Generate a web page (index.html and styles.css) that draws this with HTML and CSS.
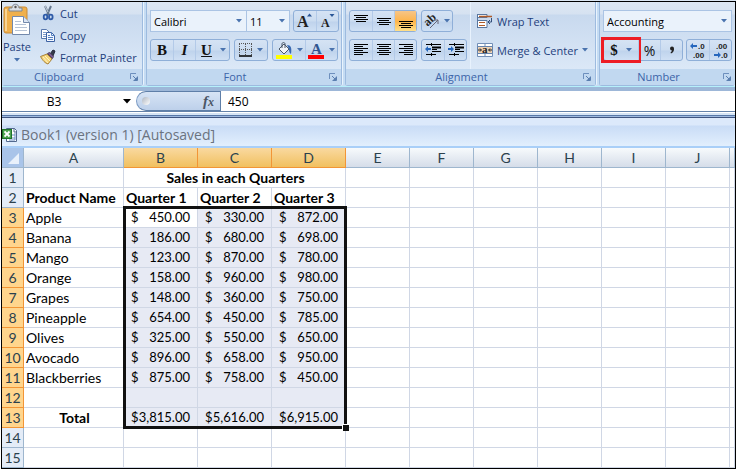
FILE: index.html
```html
<!DOCTYPE html>
<html lang="en">
<head>
<meta charset="utf-8">
<title>Book1 (version 1) [Autosaved]</title>
<link rel="stylesheet" href="styles.css">
</head>
<body>
<svg class="defs" aria-hidden="true">
  <symbol id="caret" viewBox="0 0 6 4"><path d="M0 0h6L3 3.5z" fill="currentColor"/></symbol>
  <symbol id="launch" viewBox="0 0 8 8"><path d="M0.5 6V0.500H6" fill="none" stroke="#6d8fbd"/><path d="M3 3l3 3M7.500 3.500v4h-4" fill="none" stroke="#5a7fb0"/><path d="M7 4v3H4z" fill="#5a7fb0"/></symbol>
</svg>
<div class="app">
  <header class="ribbon">
    <section class="group clipboard">
      <div class="body">
        <button class="paste">
          <svg width="28" height="34" viewBox="0 0 28 34">
            <rect x="1" y="3" width="23" height="26" rx="2" fill="#f0b04c" stroke="#c98a35"/>
            <path d="M3 5v22" stroke="#f9d493" stroke-width="2"/>
            <path d="M6 7V4h3c0-5 7-5 7 0h3v3z" fill="#d9dde3" stroke="#7d8590"/><circle cx="12.500" cy="3" r="1.200" fill="#555"/>
            <path d="M9.500 12.500h11l6 6v12h-17z" fill="#fff" stroke="#7389ac"/>
            <path d="M20.500 12.500v6h6" fill="#dbe5f3" stroke="#7389ac"/>
            <path d="M12 17.500h6M12 20.500h11M12 23.500h12M12 26.500h12" stroke="#b6c3d6"/>
          </svg>
          <span>Paste</span>
          <svg class="caret"><use href="#caret"/></svg>
        </button>
        <div class="stack">
          <button class="cmd"><svg width="16" height="16" viewBox="0 0 16 16"><path d="M5 1l4 9M11 1L7 10" stroke="#66788f" stroke-width="2"/><path d="M5 1l3 6" stroke="#c7d0db"/><ellipse cx="5.500" cy="12" rx="1.800" ry="2.300" fill="none" stroke="#2f5ba8" stroke-width="1.800"/><ellipse cx="10.800" cy="12" rx="1.800" ry="2.300" fill="none" stroke="#2f5ba8" stroke-width="1.800"/></svg><span>Cut</span></button>
          <button class="cmd"><svg width="16" height="16" viewBox="0 0 16 16"><path d="M1.500 2.500h5l3 3v6h-8z" fill="#fff" stroke="#5777ad"/><path d="M3 5.500h3M3 7.500h4M3 9.500h4" stroke="#7c9bcb"/><path d="M6.500 5.500h5l3 3v6h-8z" fill="#f4f8ff" stroke="#3d62a3"/><path d="M11.500 5.500v3h3M8 8.500h2M8 10.500h5M8 12.500h5" fill="none" stroke="#5480c0"/></svg><span>Copy</span></button>
          <button class="cmd"><svg width="16" height="16" viewBox="0 0 16 16"><path d="M10 5l3-4 2 1-2 5z" fill="#343a4a" stroke="#23283a"/><path d="M0.500 7.500L7 5l5 5-4 5c-3-1-5-3-7.500-7.500z" fill="#f5d478" stroke="#a88139"/><path d="M3 8l5 6M5 7l5 5" stroke="#fff3c4"/><path d="M7.500 4.500l5 5 1-2-4-4z" fill="#7b5b91" stroke="#50405f"/></svg><span>Format Painter</span></button>
        </div>
      </div>
      <footer><span>Clipboard</span><button class="launch" aria-label="Clipboard options"><svg width="8" height="8"><use href="#launch"/></svg></button></footer>
    </section>

    <section class="group font">
      <div class="body rows">
        <div class="row">
          <div class="combos">
            <label class="combo name"><select aria-label="Font"><option>Calibri</option></select><svg class="caret"><use href="#caret"/></svg></label>
            <label class="combo size"><select aria-label="Font size"><option>11</option></select><svg class="caret"><use href="#caret"/></svg></label>
          </div>
          <div class="set">
            <button class="tool w22" aria-label="Grow font"><svg width="18" height="18" viewBox="0 0 18 18"><text x="1" y="15" class="serif" font-size="16">A</text><path d="M11 4.500h5L13.500 1.500z" fill="#2b5797"/></svg></button>
            <button class="tool w22" aria-label="Shrink font"><svg width="18" height="18" viewBox="0 0 18 18"><text x="2" y="15" class="serif" font-size="12">A</text><path d="M10.500 2h5L13 5z" fill="#2b5797"/></svg></button>
          </div>
        </div>
        <div class="row spread">
          <div class="set">
            <button class="tool letter w22">B</button>
            <button class="tool letter w22 italic">I</button>
            <button class="tool letter w22 under">U</button>
            <button class="tool w12" aria-label="Underline styles"><svg class="caret"><use href="#caret"/></svg></button>
          </div>
          <div class="set">
            <button class="tool w32" aria-label="Borders"><svg width="14" height="14" viewBox="0 0 14 14"><path d="M.5 1v11M6.500 1v11M12.500 1v11M0 .5h13M0 6.500h13" stroke="#555" stroke-dasharray="1 1"/><path d="M0 13h13" stroke="#000" stroke-width="1.500"/></svg><svg class="caret"><use href="#caret"/></svg></button>
          </div>
          <div class="set">
            <button class="tool w32" aria-label="Fill color"><svg width="17" height="17" viewBox="0 0 17 17"><path d="M3 7l5-5 5 5-5 5z" fill="#f1f4f8" stroke="#4c5968"/><path d="M6 6V2c0-2 3-2 3 0v4" fill="none" stroke="#4c5968"/><path d="M11 3c4 0 5 3 4 9-2-1-2-4-2-5z" fill="#3869b1"/><path d="M0 13h16v4H0z" fill="#ff0"/></svg><svg class="caret"><use href="#caret"/></svg></button>
            <button class="tool w32" aria-label="Font color"><svg width="17" height="17" viewBox="0 0 17 17"><text x="3" y="12" class="serif blue" font-size="15">A</text><path d="M0 13h16v4H0z" fill="red"/></svg><svg class="caret"><use href="#caret"/></svg></button>
          </div>
        </div>
      </div>
      <footer><span>Font</span><button class="launch" aria-label="Font options"><svg width="8" height="8"><use href="#launch"/></svg></button></footer>
    </section>

    <section class="group align">
      <div class="body">
        <div class="rows">
          <div class="row">
            <div class="set">
              <button class="tool w22" aria-label="Top align"><svg width="14" height="16" viewBox="0 0 14 16"><path d="M0 2.500h14M2 4.500h10M0 6.500h14M2 8.500h10" stroke="#000"/></svg></button>
              <button class="tool w22" aria-label="Middle align"><svg width="14" height="16" viewBox="0 0 14 16"><path d="M0 5.500h14M2 7.500h10M0 9.500h14M2 11.500h10" stroke="#000"/></svg></button>
              <button class="tool w22 on" aria-label="Bottom align"><svg width="14" height="16" viewBox="0 0 14 16"><path d="M0 8.500h14M2 10.500h10M0 12.500h14M2 14.500h10" stroke="#000"/></svg></button>
            </div>
            <div class="set">
              <button class="tool w30" aria-label="Orientation"><svg width="16" height="16" viewBox="0 0 16 16"><text x="1" y="11" class="serif" font-size="12" transform="rotate(-42 6 9)">ab</text><path d="M6 15l8-8M14 7h-4M14 7v4" fill="none" stroke="#667"/></svg><svg class="caret"><use href="#caret"/></svg></button>
            </div>
          </div>
          <div class="row">
            <div class="set">
              <button class="tool w22" aria-label="Align left"><svg width="14" height="12" viewBox="0 0 14 12"><path d="M0 .5h14M0 2.500h9M0 4.500h14M0 6.500h9M0 8.500h14M0 10.500h9" stroke="#000"/></svg></button>
              <button class="tool w22" aria-label="Center"><svg width="14" height="12" viewBox="0 0 14 12"><path d="M0 .5h14M2 2.500h10M0 4.500h14M2 6.500h10M0 8.500h14M2 10.500h10" stroke="#000"/></svg></button>
              <button class="tool w22" aria-label="Align right"><svg width="14" height="12" viewBox="0 0 14 12"><path d="M0 .5h14M5 2.500h9M0 4.500h14M5 6.500h9M0 8.500h14M5 10.500h9" stroke="#000"/></svg></button>
            </div>
            <div class="set">
              <button class="tool w22" aria-label="Decrease indent"><svg width="16" height="14" viewBox="0 0 16 14"><path d="M1 1.500h15M7 6.500h5M7 8.500h9M1 11.500h10" stroke="#000"/><path d="M7 4.500h9" stroke="#000" stroke-width="2"/><path d="M6.500 0v3M6.500 10v4" stroke="#000" stroke-dasharray="1 1"/><path d="M0 6l3-3v2h3v2H3v2z" fill="#2667bd"/></svg></button>
              <button class="tool w22" aria-label="Increase indent"><svg width="16" height="14" viewBox="0 0 16 14"><path d="M1 1.500h15M7 6.500h5M7 8.500h9M1 11.500h10" stroke="#000"/><path d="M7 4.500h9" stroke="#000" stroke-width="2"/><path d="M6.500 0v3M6.500 10v4" stroke="#000" stroke-dasharray="1 1"/><path d="M6 6L3 3v2H0v2h3v2z" fill="#2667bd"/></svg></button>
            </div>
          </div>
        </div>
        <div class="rows cell-tools">
          <button class="cmd"><svg width="16" height="16" viewBox="0 0 16 16"><path d="M.5 1v14" stroke="#59779f"/><path d="M1 1.500h9v3H1M1 7.500h9v7H1" fill="#fff" stroke="#59779f"/><path d="M2 3.500h13" stroke="#b05c2a" stroke-width="1.500"/><path d="M2 9.500h6M2 12.500h6" stroke="#b05c2a"/><path d="M14.500 5v4h-3M13 7l-2 2 2 2" fill="none" stroke="#334e78"/></svg><span>Wrap Text</span></button>
          <button class="cmd"><svg width="16" height="16" viewBox="0 0 16 16"><path d="M.5 1.500h15v13H.5zM8 2v3M8 11v3" fill="#fff" stroke="#7390b8"/><path d="M.5 4.500h15v7H.5z" fill="#eed2b4" stroke="#6483ad"/><text x="5" y="11" class="serif" font-size="11">a</text><path d="M1 8h3M12 8h3M3 6.500L4.500 8 3 9.500M13 6.500L11.500 8 13 9.500" fill="none" stroke="#222"/></svg><span>Merge &amp; Center</span><svg class="caret"><use href="#caret"/></svg></button>
        </div>
      </div>
      <footer><span>Alignment</span><button class="launch" aria-label="Alignment options"><svg width="8" height="8"><use href="#launch"/></svg></button></footer>
    </section>

    <section class="group number">
      <div class="body rows">
        <label class="combo"><select aria-label="Number format"><option>Accounting</option></select><svg class="caret"><use href="#caret"/></svg></label>
        <div class="row">
          <div class="set">
            <button class="tool letter w34 marked">$<svg class="caret"><use href="#caret"/></svg></button>
            <button class="tool w22 percent">%</button>
            <button class="tool w22" aria-label="Comma style"><svg width="6" height="8" viewBox="0 0 6 8"><circle cx="3" cy="2.500" r="2" fill="#222"/><path d="M5 2.500c0 3-1 4-3 5l-.5-1c1-.8 1.500-1.500 1.500-3z" fill="#222"/></svg></button>
          </div>
          <div class="set">
            <button class="tool w22" aria-label="Increase decimal"><svg width="16" height="18" viewBox="0 0 16 18"><path d="M0 5l3-3v2h4v2H3v2z" fill="#2667bd"/><text x="8" y="8" class="dec">.0</text><text x="3" y="17" class="dec">.00</text></svg></button>
            <button class="tool w22" aria-label="Decrease decimal"><svg width="16" height="18" viewBox="0 0 16 18"><path d="M8 14l-3-3v2H1v2h4v2z" fill="#2667bd"/><text x="3" y="8" class="dec">.00</text><text x="8" y="17" class="dec">.0</text></svg></button>
          </div>
        </div>
      </div>
      <footer><span>Number</span><button class="launch" aria-label="Number options"><svg width="8" height="8"><use href="#launch"/></svg></button></footer>
    </section>
  </header>

  <div class="formula">
    <input class="namebox" aria-label="Name box" value="B3">
    <button class="drop" aria-label="Names"><svg width="8" height="5" viewBox="0 0 8 5"><path d="M0 0h8L4 4.500z"/></svg></button>
    <div class="pill"><i></i><button class="fx">f<small>x</small></button></div>
    <input class="content" aria-label="Formula" value="450">
  </div>

  <div class="title">
    <svg width="16" height="16" viewBox="0 0 16 16"><path d="M4.500 1.500h8l2 2v11h-10z" fill="#fff" stroke="#52698f"/><path d="M12 1v4h3" fill="none" stroke="#52698f"/><path d="M7 13h6V6M9 11h4M10 8h3" fill="none" stroke="#6d8fc4"/><rect x=".5" y="2.500" width="9" height="9" fill="#4ca350" stroke="#1f7429"/><path d="M2.500 4.500l5 5M7.500 4.500l-5 5" stroke="#fff" stroke-width="1.800"/></svg>
    <h1>Book1 (version 1) [Autosaved]</h1>
  </div>

  <table class="sheet">
    <colgroup><col class="c-head"><col class="c-a"><col class="c-q"><col class="c-q"><col class="c-q"><col class="c-e"><col class="c-e"><col class="c-e"><col class="c-e"><col class="c-e"><col class="c-e"><col></colgroup>
    <thead>
      <tr><th class="corner"><svg width="11" height="11" viewBox="0 0 11 11"><path d="M11 0v11H0z" fill="#e9f1fb"/></svg></th><th>A</th><th class="sel">B</th><th class="sel">C</th><th class="sel">D</th><th>E</th><th>F</th><th>G</th><th>H</th><th>I</th><th>J</th><th></th></tr>
    </thead>
    <tbody>
      <tr><th>1</th><td></td><td colspan="3" class="heading">Sales in each Quarters</td><td></td><td></td><td></td><td></td><td></td><td></td><td></td></tr>
      <tr class="bold"><th>2</th><td>Product Name</td><td>Quarter 1</td><td>Quarter 2</td><td>Quarter 3</td><td></td><td></td><td></td><td></td><td></td><td></td><td></td></tr>
      <tr class="picked"><th>3</th><td>Apple</td><td class="m active"><div><span>$</span><span>450.00</span></div><div class="selection"></div></td><td class="m"><div><span>$</span><span>330.00</span></div></td><td class="m"><div><span>$</span><span>872.00</span></div></td><td></td><td></td><td></td><td></td><td></td><td></td><td></td></tr>
      <tr class="picked"><th>4</th><td>Banana</td><td class="m"><div><span>$</span><span>186.00</span></div></td><td class="m"><div><span>$</span><span>680.00</span></div></td><td class="m"><div><span>$</span><span>698.00</span></div></td><td></td><td></td><td></td><td></td><td></td><td></td><td></td></tr>
      <tr class="picked"><th>5</th><td>Mango</td><td class="m"><div><span>$</span><span>123.00</span></div></td><td class="m"><div><span>$</span><span>870.00</span></div></td><td class="m"><div><span>$</span><span>780.00</span></div></td><td></td><td></td><td></td><td></td><td></td><td></td><td></td></tr>
      <tr class="picked"><th>6</th><td>Orange</td><td class="m"><div><span>$</span><span>158.00</span></div></td><td class="m"><div><span>$</span><span>960.00</span></div></td><td class="m"><div><span>$</span><span>980.00</span></div></td><td></td><td></td><td></td><td></td><td></td><td></td><td></td></tr>
      <tr class="picked"><th>7</th><td>Grapes</td><td class="m"><div><span>$</span><span>148.00</span></div></td><td class="m"><div><span>$</span><span>360.00</span></div></td><td class="m"><div><span>$</span><span>750.00</span></div></td><td></td><td></td><td></td><td></td><td></td><td></td><td></td></tr>
      <tr class="picked"><th>8</th><td>Pineapple</td><td class="m"><div><span>$</span><span>654.00</span></div></td><td class="m"><div><span>$</span><span>450.00</span></div></td><td class="m"><div><span>$</span><span>785.00</span></div></td><td></td><td></td><td></td><td></td><td></td><td></td><td></td></tr>
      <tr class="picked"><th>9</th><td>Olives</td><td class="m"><div><span>$</span><span>325.00</span></div></td><td class="m"><div><span>$</span><span>550.00</span></div></td><td class="m"><div><span>$</span><span>650.00</span></div></td><td></td><td></td><td></td><td></td><td></td><td></td><td></td></tr>
      <tr class="picked"><th>10</th><td>Avocado</td><td class="m"><div><span>$</span><span>896.00</span></div></td><td class="m"><div><span>$</span><span>658.00</span></div></td><td class="m"><div><span>$</span><span>950.00</span></div></td><td></td><td></td><td></td><td></td><td></td><td></td><td></td></tr>
      <tr class="picked"><th>11</th><td>Blackberries</td><td class="m"><div><span>$</span><span>875.00</span></div></td><td class="m"><div><span>$</span><span>758.00</span></div></td><td class="m"><div><span>$</span><span>450.00</span></div></td><td></td><td></td><td></td><td></td><td></td><td></td><td></td></tr>
      <tr class="picked"><th>12</th><td></td><td class="m"></td><td class="m"></td><td class="m"></td><td></td><td></td><td></td><td></td><td></td><td></td><td></td></tr>
      <tr class="picked"><th>13</th><td class="heading">Total</td><td class="m"><div><span>$</span><span>3,815.00</span></div></td><td class="m"><div><span>$</span><span>5,616.00</span></div></td><td class="m"><div><span>$</span><span>6,915.00</span></div></td><td></td><td></td><td></td><td></td><td></td><td></td><td></td></tr>
      <tr><th>14</th><td></td><td></td><td></td><td></td><td></td><td></td><td></td><td></td><td></td><td></td><td></td></tr>
      <tr><th>15</th><td></td><td></td><td></td><td></td><td></td><td></td><td></td><td></td><td></td><td></td><td></td></tr>
    </tbody>
  </table>
</div>
</body>
</html>
```
FILE: styles.css
```css
* { box-sizing: border-box; }
body { margin: 0; background: #fff; font-family: "Open Sans", sans-serif; font-size: 11px; color: #1e3f7c; border-top: 1px solid #dbe6f2; }
button, input, select { font: inherit; color: inherit; border: 0; padding: 0; margin: 0; background: none; }
svg { display: block; flex: none; overflow: visible; }
.defs { position: absolute; width: 0; height: 0; }
.caret { width: 6px; height: 4px; color: #4a73ae; }
.app { margin-left: 1px; border: 1px solid #000; overflow: hidden; }

/* Ribbon */
.ribbon { display: flex; gap: 3px; background: #c5dcf3; border-bottom: 1px solid #b5f0fb; }
.group { display: flex; flex-direction: column; border: 1px solid #9dbbdf; border-top: 0; border-radius: 0 0 3px 3px; box-shadow: 1px 0 #e9f3fd; background: linear-gradient(#dde7f3 0, #d6e2f1 12px, #c8d9ee 13px, #dbe8f7 67px); }
.clipboard { width: 141px; border-left: 0; }
.font { width: 196px; }
.align { width: 251px; }
.number { flex: 1; border-right: 0; }
.body { display: flex; height: 67px; }
.group footer { display: flex; align-items: center; height: 16px; padding: 0 4px; background: #c1d8f0; color: #3c64a8; line-height: 16px; }
.group footer span { flex: 1; text-align: center; padding-right: 10px; }
.clipboard footer span { padding-right: 18px; }
.launch { display: block; }
.paste { display: flex; flex-direction: column; align-items: center; width: 30px; padding-top: 2px; line-height: 16px; }
.paste span { padding-top: 1px; }
.paste .caret { margin-top: 3px; }
.stack { padding: 0 0 0 8px; }
.cmd { display: flex; align-items: center; gap: 4px; height: 22px; white-space: nowrap; }
.rows { display: flex; flex-direction: column; gap: 7px; padding: 8px 3px 0; }
.row { display: flex; gap: 3px; }
.spread { justify-content: space-between; }
.combos { display: flex; }
.combo { display: flex; align-items: center; height: 22px; padding: 0 4px 0 3px; background: #eaf2fb; border: 1px solid #abc4e4; color: #000; }
.combo select { flex: 1; min-width: 0; appearance: none; }
.combo.name { width: 97px; }
.combo.size { width: 43px; border-left: 0; }
.set { display: flex; border: 1px solid #8fafd8; border-radius: 3px; background: linear-gradient(#d5e3f4 0, #cbdcf0 10px, #bfd3ec 11px, #cfe0f4 20px); }
.tool { display: flex; align-items: center; justify-content: center; height: 20px; gap: 4px; }
.tool + .tool { border-left: 1px solid #b3cae8; }
.w12 { width: 12px; }
.tool.w12 { border-left: 0; }
.w22 { width: 22px; }
.w30 { width: 30px; }
.w32 { width: 32px; }
.w34 { width: 34px; }
.on { background: linear-gradient(#f6c588, #fdb44b 50%, #ffe08a); }
.letter { font-family: "Liberation Serif", serif; font-weight: bold; font-size: 15px; color: #111; }
.italic { font-style: italic; }
.under { text-decoration: underline; }
.percent { font-size: 14px; color: #111; }
.serif { font-family: "Liberation Serif", serif; font-weight: bold; fill: #222; }
.blue { fill: #30558f; }
.dec { font-family: "Liberation Sans", sans-serif; font-weight: bold; font-size: 8px; fill: #222; }
.marked { outline: 3px solid #ed1c24; gap: 8px; }
.align .row { gap: 4px; }
.cell-tools { padding-left: 6px; border-left: 1px solid #e8f2fd; }

/* Formula bar */
.formula { display: flex; height: 25px; border-top: 4px solid #9db7d8; border-bottom: 1px solid #6482a9; background: #fff; color: #000; font-size: 12px; }
.namebox { width: 104px; text-align: center; }
.drop { width: 28px; display: flex; align-items: center; justify-content: flex-end; padding-right: 3px; }
.pill { display: flex; align-items: center; justify-content: space-between; width: 85px; margin-left: 2px; padding: 0 6px 0 5px; border: 1px solid #5f7fa8; border-left-color: #7d9cc5; border-radius: 11px 0 0 11px; background: linear-gradient(#d7e4f5, #bdd0ea); }
.pill i { width: 8px; height: 8px; border-radius: 50%; background: linear-gradient(135deg, #aeb6c1, #fff); }
.fx { font: italic bold 15px "Liberation Serif", serif; color: #4b5665; }
.fx small { font-size: 12px; }
.content { flex: 1; min-width: 0; padding-left: 7px; }

/* Workbook title */
.title { display: flex; align-items: center; gap: 3px; height: 36px; padding-top: 11px; border-bottom: 2px solid #a9cff8; background: linear-gradient(#fff 0 1px, #d5e4f5 1px 3px, #5878a8 3px 4px, #9db9df 4px 5px, #3f5480 5px 6px, #dce9fb 6px 13px, #c9dcf6 14px, #e2effd 34px); color: #6b7380; }
.title h1 { margin: 0; font-size: 14px; line-height: 20px; font-weight: normal; }

/* Grid */
.sheet { width: 100%; table-layout: fixed; border-collapse: separate; border-spacing: 0; font-family: Lato, sans-serif; font-size: 14px; line-height: 19px; color: #000; }
.c-head { width: 22px; }
.c-a { width: 100px; }
.c-q { width: 74px; }
.c-e { width: 64px; }
.sheet td, .sheet th { height: 20px; padding: 0; border: solid #d0d7e5; border-width: 0 1px 1px 0; white-space: nowrap; }
.sheet td { padding-left: 2px; }
.sheet th { font-weight: normal; text-align: center; color: #2b414d; background: #e4ecf7; border-color: #9eb6ce; }
.sheet thead th { background: linear-gradient(#f7fafc, #d5dde9); }
.sheet thead th.sel { background: linear-gradient(#f9d9a0, #f1c05f); border-color: #f29536; }
.sheet thead th.corner { background: #a9c4e9; }
.corner svg { margin: 2px 4px 0 auto; }
.sheet .picked th { background: #ffd58d; border-color: #f29536; }
.sheet .heading { text-align: center; font-weight: bold; }
.bold td { font-weight: bold; }
.sheet .m { background: #e7eaf4; padding: 0 7px; font-size: 13px; }
.sheet .active { position: relative; background: #fff; }
.m div { display: flex; justify-content: space-between; }
.m .selection { position: absolute; left: -1px; top: -2px; width: 224px; height: 223px; border: 3px solid #111; pointer-events: none; }
.selection::after { content: ""; position: absolute; right: -5px; bottom: -5px; width: 6px; height: 6px; background: #111; border: solid #fff; border-width: 1px 0 0 1px; }
```
